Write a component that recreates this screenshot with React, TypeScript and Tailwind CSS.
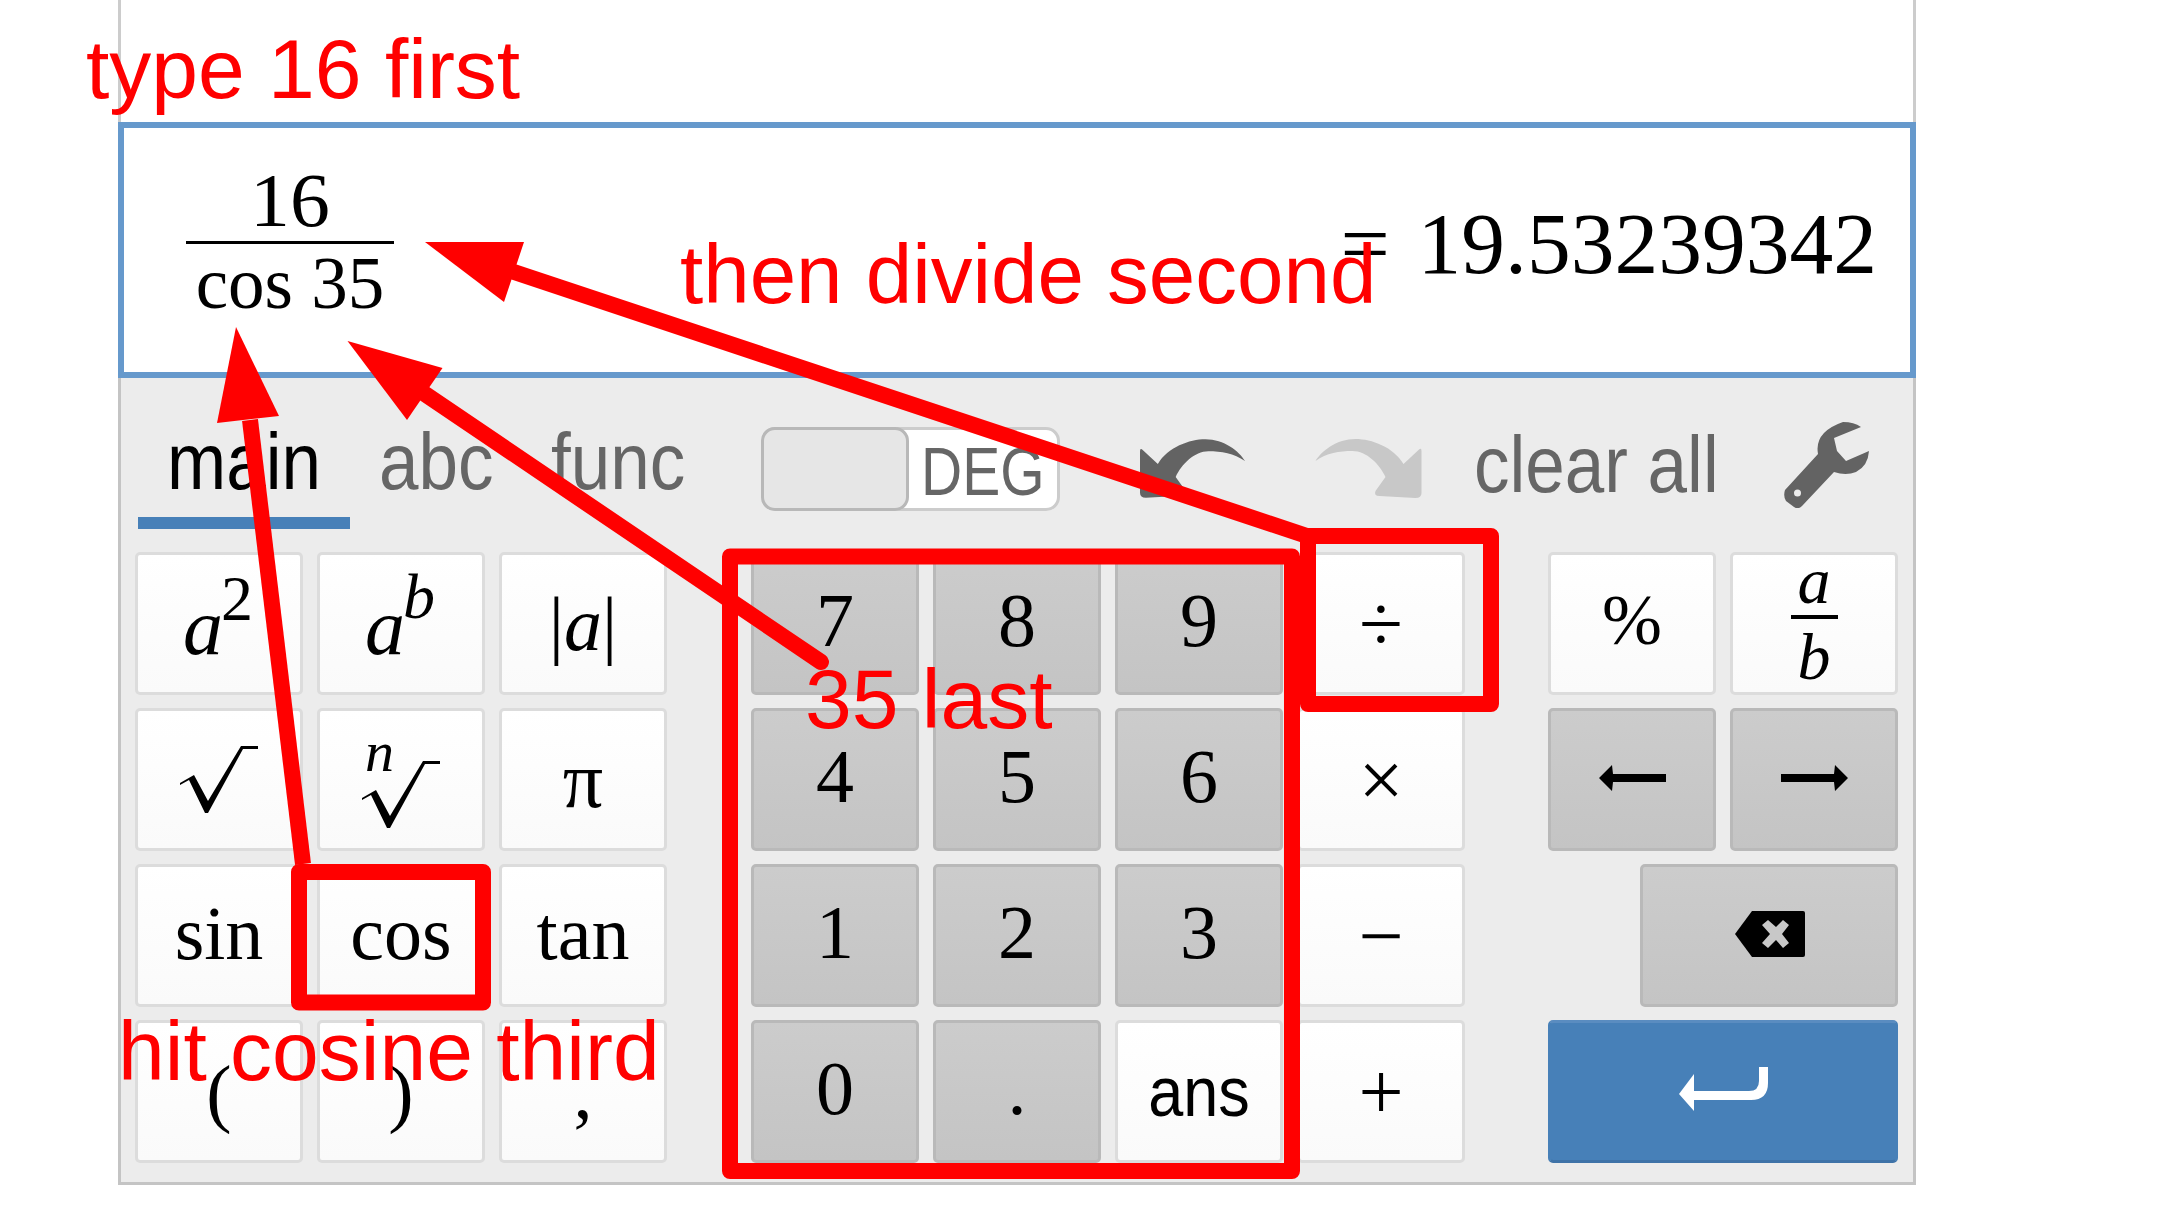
import React from "react";

const white = "border-[#dcdcdc] bg-linear-to-b from-white to-[#fafafa] text-black";
const gray = "border-[#b9b9b9] bg-linear-to-b from-[#cccccc] to-[#c4c4c4] text-black";
const blue = "border-[#4780b8] border-t-[#5a8cc0] border-b-[#3f73a8] bg-[#4780b8]";
const serif = "font-['Liberation_Serif',serif]";
const sans = "font-['Liberation_Sans',sans-serif]";

function Key({ look = white, font = serif, size = "text-[76px]", children, className = "" }: { look?: string; font?: string; size?: string; children?: React.ReactNode; className?: string }) {
  return (
    <div className={`h-[143px] rounded-[5px] border-[3px] flex items-center justify-center leading-none ${font} ${size} ${look} ${className}`}>
      {children}
    </div>
  );
}

function Sqrt({ className = "" }: { className?: string }) {
  return (
    <svg viewBox="0 0 78 67" className={`w-[78px] h-[67px] ${className}`}>
      <path d="M0 39 L9 34 L25 67 L28 67 L63 3 L78 3 L78 0 L61 0 L28 55 L14 29 L0 37 Z" fill="#000" />
    </svg>
  );
}

function Tx({ children }: { children: React.ReactNode }) {
  return <span className="scale-y-[1.12] inline-block">{children}</span>;
}

const Red = ({ children, className }: { children: React.ReactNode; className: string }) => (
  <div className={`absolute leading-none whitespace-nowrap text-[#ff0000] ${className}`}>{children}</div>
);

export default function App() {
  return (
    <div className="relative w-[2184px] h-[1223px] overflow-hidden bg-white font-['Liberation_Sans',sans-serif]">
      <div className="ml-[118px] w-[1798px] flex flex-col">
        <div className="h-[122px] border-x-[3px] border-[#cccccc]" />
        <div className="h-[256px] border-[6px] border-[#6699cc] bg-white flex justify-between items-start font-['Liberation_Serif',serif] text-black leading-none">
          <div className="ml-[62px] w-[208px] pt-[34px] flex flex-col items-center text-[76px]">
            <div className="h-[76px] scale-x-[1.05]">16</div>
            <div className="mt-[3px] w-full h-[3px] bg-black" />
            <div className="mt-[1px] h-[76px] whitespace-nowrap text-[73px] pt-[2px]">cos 35</div>
          </div>
          <div className="pt-[72px] pr-[33px] text-[87.5px] [word-spacing:6px] whitespace-nowrap">= 19.53239342</div>
        </div>
        <div className="h-[807px] bg-[#ececec] border-x-[3px] border-b-[3px] border-[#c4c4c4]">
          <div className="h-[174px] flex items-start pl-[17px] text-[71px] leading-none text-[#666666]">
            <div className="w-[212px] h-[151px] border-b-[12px] border-[#4780b8] pt-[48px] text-center text-black"><Tx>main</Tx></div>
            <div className="ml-[29px] w-[172px] pt-[48px]"><Tx>abc</Tx></div>
            <div className="w-[210px] pt-[48px]"><Tx>func</Tx></div>
            <div className="mt-[49px] w-[299px] h-[84px] rounded-[14px] border-[3px] border-[#cccccc] bg-white flex">
              <div className="-m-[3px] w-[148px] h-[84px] rounded-[14px] border-[3px] border-[#b8b8b8] bg-[#e6e6e6]" />
              <div className="flex-1 pl-[15px] pt-[13px] text-[57px] scale-y-[1.2]">DEG</div>
            </div>
            <svg viewBox="0 0 106 59" className="ml-[80px] mt-[61px] w-[105px] h-[59px]">
              <path d="M0 12 Q0 8 3 11 L18 25 C28 8 50 0 66 0 C85 0 100 12 106 22 C95 14 82 12 69 12 C55 12 42 25 36 38 L46 52 Q48 57 42 57 L6 59 Q0 59 0 54 Z" fill="#636363" />
            </svg>
            <svg viewBox="0 0 106 59" className="ml-[70px] mt-[61px] w-[107px] h-[59px] -scale-x-100">
              <path d="M0 12 Q0 8 3 11 L18 25 C28 8 50 0 66 0 C85 0 100 12 106 22 C95 14 82 12 69 12 C55 12 42 25 36 38 L46 52 Q48 57 42 57 L6 59 Q0 59 0 54 Z" fill="#c8c8c8" />
            </svg>
            <div className="ml-[52px] w-[245px] pt-[51px] whitespace-nowrap"><Tx>clear all</Tx></div>
            <svg viewBox="0 0 85 86" className="ml-[65px] mt-[44px] w-[85px] h-[86px]">
              <path fillRule="evenodd" d="M59 0 Q70 0 77 5 L50 16 L53 29 L62 39 L85 29 Q84 44 72 50 Q62 54 50 50 L18 84 Q14 88 10 85 L2 79 Q-1 74 1 68 L34 32 Q30 10 59 0 Z M13.5 67.5 A3.5 3.5 0 1 0 13.5 74.5 A3.5 3.5 0 1 0 13.5 67.5 Z" fill="#636363" />
            </svg>
          </div>
          <div className="flex pl-[14px]">
            <div className="grid grid-cols-[repeat(3,168px)] gap-x-[14px] gap-y-[13px]">
              <Key size="text-[80px]"><i className="relative top-[3px]">a<sup className="absolute left-[38px] -top-[20px] text-[64px] not-italic leading-none">2</sup><span className="invisible text-[64px]">2</span></i></Key>
              <Key size="text-[80px]"><i className="relative top-[3px]">a<sup className="absolute left-[38px] -top-[22px] text-[64px] leading-none">b</sup><span className="invisible text-[64px]">b</span></i></Key>
              <Key><span>|<i>a</i>|</span></Key>
              <Key><Sqrt /></Key>
              <Key className="relative"><i className="absolute left-[45px] top-[12px] text-[58px] leading-none">n</i><Sqrt className="mt-[30px]" /></Key>
              <Key size="text-[80px]">π</Key>
              <Key className="pb-[6px]">sin</Key>
              <Key className="pb-[6px]">cos</Key>
              <Key className="pb-[6px]">tan</Key>
              <Key>(</Key>
              <Key>)</Key>
              <Key>,</Key>
            </div>
            <div className="ml-[84px] grid grid-cols-[repeat(4,168px)] gap-x-[14px] gap-y-[13px]">
              <Key look={gray} className="pb-2">7</Key>
              <Key look={gray} className="pb-2">8</Key>
              <Key look={gray} className="pb-2">9</Key>
              <Key size="text-[80px]">÷</Key>
              <Key look={gray} className="pb-2">4</Key>
              <Key look={gray} className="pb-2">5</Key>
              <Key look={gray} className="pb-2">6</Key>
              <Key size="text-[80px]">×</Key>
              <Key look={gray} className="pb-2">1</Key>
              <Key look={gray} className="pb-2">2</Key>
              <Key look={gray} className="pb-2">3</Key>
              <Key size="text-[80px]">−</Key>
              <Key look={gray} className="pb-2">0</Key>
              <Key look={gray} className="pb-2">.</Key>
              <Key font={sans} size="text-[63px]"><Tx>ans</Tx></Key>
              <Key size="text-[80px]">+</Key>
            </div>
            <div className="ml-[83px] grid grid-cols-[repeat(2,168px)] gap-x-[14px] gap-y-[13px]">
              <Key size="text-[72px]" className="pb-[8px]">%</Key>
              <Key>
                <div className="-mt-[10px] flex flex-col items-center italic text-[66px] leading-none">
                  <span className="h-[67px]">a</span>
                  <span className="w-[47px] h-[4px] bg-black" />
                  <span className="mt-[5px] h-[66px]">b</span>
                </div>
              </Key>
              <Key look={gray}>
                <svg viewBox="0 0 67 26" className="w-[67px] h-[26px] mb-[3px]">
                  <path d="M0 13 L13 0 L14 9 L67 9 L67 17 L14 17 L13 26 Z" fill="#000" />
                </svg>
              </Key>
              <Key look={gray}>
                <svg viewBox="0 0 67 26" className="w-[67px] h-[26px] mb-[3px] -scale-x-100">
                  <path d="M0 13 L13 0 L14 9 L67 9 L67 17 L14 17 L13 26 Z" fill="#000" />
                </svg>
              </Key>
              <Key look={gray} className="col-span-2 justify-self-end w-[258px]">
                <svg viewBox="0 0 70 46" className="w-[70px] h-[46px] mb-[4px] ml-[2px]">
                  <path d="M0 23 L17 0 L68 0 Q70 0 70 2 L70 44 Q70 46 68 46 L17 46 Z" fill="#000" />
                  <path d="M33 9 L41 16 L48 9 L54 14 L47 23 L54 32 L48 37 L41 29 L33 37 L27 32 L35 23 L27 14 Z" fill="#c8c8c8" />
                </svg>
              </Key>
              <Key look={blue} className="col-span-2">
                <svg viewBox="0 0 89 44" className="w-[89px] h-[44px] mb-[6px]">
                  <path fillRule="evenodd" d="M0 27 L15 7 L15 24 L70 24 Q80 24 80 14 L80 0 L89 0 L89 16 Q89 33 72 33 L15 33 L15 44 Z" fill="#ffffff" />
                </svg>
              </Key>
            </div>
          </div>
        </div>
      </div>

      <svg viewBox="0 0 2184 1223" className="absolute inset-0 w-[2184px] h-[1223px] pointer-events-none">
        <g fill="none" stroke="#ff0000" strokeWidth="16" strokeLinejoin="round" strokeLinecap="round">
          <rect x="730" y="556.5" width="562" height="614.5" />
          <rect x="1308" y="536" width="183" height="168" />
          <rect x="299" y="872" width="184" height="130.5" />
          <line x1="514" y1="272" x2="1310" y2="537" />
          <line x1="425" y1="394" x2="821" y2="662" />
          <line x1="250" y1="420" x2="303" y2="864" strokeLinecap="butt" />
        </g>
        <polygon points="425,242 524,242 504,302" fill="#ff0000" />
        <polygon points="347.5,341 442.5,368 407,420" fill="#ff0000" />
        <polygon points="236,327 279,416 217,423" fill="#ff0000" />
      </svg>

      <Red className="left-[86px] top-[27px] text-[84px]">type 16 first</Red>
      <Red className="left-[680px] top-[233px] text-[83.5px]">then divide second</Red>
      <Red className="left-[805px] top-[657px] text-[84px]">35 last</Red>
      <Red className="left-[118px] top-[1009px] text-[84px]">hit cosine third</Red>
    </div>
  );
}
